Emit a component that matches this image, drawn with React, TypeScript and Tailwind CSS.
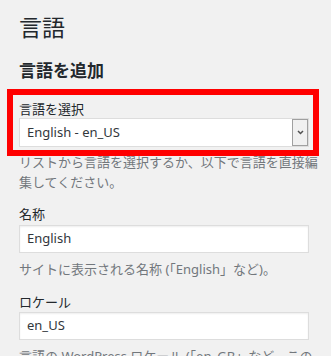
import React from 'react'

const font = { fontFamily: '"Noto Sans", "Noto Sans CJK JP", sans-serif' }

function Field({ label, children, desc }: { label: string; children: React.ReactNode; desc: React.ReactNode }) {
  return (
    <div>
      <label className="block text-[13px] leading-[20px] text-[#23282d]">{label}</label>
      {children}
      <p className="mt-[6px] text-[13px] leading-[20px] text-[#72777c] whitespace-nowrap">{desc}</p>
    </div>
  )
}

function TextBox({ value }: { value: string }) {
  return (
    <div className="h-[28px] w-[290px] bg-white border border-[#dddddd] shadow-[inset_0_1px_2px_rgba(0,0,0,0.07)] flex items-center pl-[7px] text-[13px] text-[#32373c]">
      {value}
    </div>
  )
}

export default function App() {
  return (
    <div className="relative min-h-[356px] bg-[#f1f1f1] pl-[19px] pr-[10px] pt-[13px] overflow-hidden" style={font}>
      <h1 className="text-[23px] leading-[29px] text-[#23282d]">言語</h1>
      <h2 className="mt-[17px] text-[17px] leading-[24px] font-bold text-[#23282d]">言語を追加</h2>

      <div className="mt-[17px]">
        <label className="block text-[13px] leading-[18px] text-[#23282d]">言語を選択</label>
        <div className="h-[29px] w-[290px] bg-white border border-[#dddddd] flex items-center justify-between">
          <span className="pl-[7px] text-[13px] text-[#32373c]">English - en_US</span>
          <span className="h-[27px] w-[16px] bg-[#f0f0f0] border border-[#a0a0a0] flex items-center justify-center">
            <svg width="7" height="5" viewBox="0 0 7 5">
              <path d="M1 1 L3.5 3.5 L6 1" fill="none" stroke="#505050" strokeWidth="1.5" />
            </svg>
          </span>
        </div>
        <p className="mt-[5px] text-[13px] leading-[20px] text-[#72777c]">
          リストから言語を選択するか、以下で言語を直接編集してください。
        </p>
      </div>

      <div className="mt-[12px] flex flex-col gap-[13px]">
        <Field label="名称" desc="サイトに表示される名称 (「English」など)。">
          <div className="mt-px">
            <TextBox value="English" />
          </div>
        </Field>
        <Field label="ロケール" desc="言語の WordPress ロケール (「en_GB」など。この">
          <TextBox value="en_US" />
        </Field>
      </div>

      {/* annotation box */}
      <div className="absolute left-[7px] top-[89px] w-[312px] h-[67px] border-[6px] border-[#ff0000] pointer-events-none" />
    </div>
  )
}
